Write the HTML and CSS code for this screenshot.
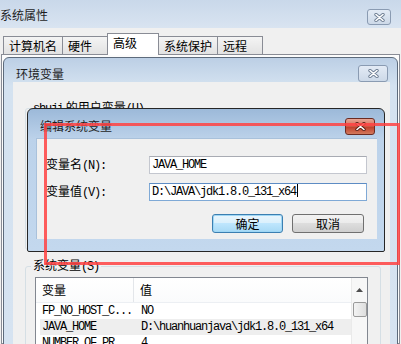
FILE: index.html
```html
<!DOCTYPE html>
<html lang="zh">
<head>
    <meta charset="UTF-8">
    <title>编辑系统变量</title>
    <link rel="stylesheet" href="styles.css">
</head>
<body>
    <div class="screen">
        <div class="sys">
            <div class="sys-title">
                <span class="title">系统属性</span>
                <span class="close close-sys">
                    <svg width="11" height="9" viewBox="0 0 11 9"><path d="M2 1.5 L9 7.5 M9 1.5 L2 7.5" stroke="#6f7f94" stroke-width="3.4" stroke-linecap="round"/><path d="M2 1.5 L9 7.5 M9 1.5 L2 7.5" stroke="#fff" stroke-width="1.6" stroke-linecap="round"/></svg>
                </span>
            </div>
            <div class="sys-body">
                <div class="tabs">
                    <span class="tab">计算机名</span>
                    <span class="tab">硬件</span>
                    <span class="tab active">高级</span>
                    <span class="tab">系统保护</span>
                    <span class="tab">远程</span>
                </div>
                <div class="tab-panel"></div>
            </div>
        </div>

        <div class="win env">
            <div class="titlebar">
                <span class="title">环境变量</span>
                <span class="close">
                    <svg width="11" height="9" viewBox="0 0 11 9"><path d="M2 1.5 L9 7.5 M9 1.5 L2 7.5" stroke="#6f7f94" stroke-width="3.4" stroke-linecap="round"/><path d="M2 1.5 L9 7.5 M9 1.5 L2 7.5" stroke="#fff" stroke-width="1.6" stroke-linecap="round"/></svg>
                </span>
            </div>
            <div class="client env-client">
                <fieldset class="group user-group">
                    <legend><span class="mono">shuji</span> 的用户变量<span class="mono">(U)</span></legend>
                </fieldset>
                <fieldset class="group">
                    <legend>系统变量<span class="mono">(S)</span></legend>
                    <div class="listview">
                        <div class="lv-main">
                            <div class="lv-head">
                                <span class="lv-col1">变量</span>
                                <span class="lv-col2">值</span>
                            </div>
                            <div class="lv-row mono">
                                <span class="lv-col1">FP_NO_HOST_C...</span>
                                <span>NO</span>
                            </div>
                            <div class="lv-row mono selected">
                                <span class="lv-col1">JAVA_HOME</span>
                                <span>D:\huanhuanjava\jdk1.8.0_131_x64</span>
                            </div>
                            <div class="lv-row mono">
                                <span class="lv-col1">NUMBER_OF_PR...</span>
                                <span>4</span>
                            </div>
                        </div>
                        <div class="scrollbar">
                            <span class="sb-up">
                                <svg width="7" height="4" viewBox="0 0 7 4"><path d="M0 4 L3.5 0 L7 4 Z" fill="#4d4d4d"/></svg>
                            </span>
                            <span class="sb-thumb"></span>
                        </div>
                    </div>
                </fieldset>
            </div>
        </div>

        <div class="win edit">
            <div class="titlebar">
                <span class="title">编辑系统变量</span>
                <span class="close close-red">
                    <svg width="11" height="9" viewBox="0 0 11 9"><path d="M2 1.5 L9 7.5 M9 1.5 L2 7.5" stroke="#5a1d14" stroke-width="3.4" stroke-linecap="round"/><path d="M2 1.5 L9 7.5 M9 1.5 L2 7.5" stroke="#fff" stroke-width="1.6" stroke-linecap="round"/></svg>
                </span>
            </div>
            <div class="client edit-client">
                <div class="field-grid">
                    <span class="label">变量名<span class="mono">(N):</span></span>
                    <div class="textbox mono">JAVA_HOME</div>
                    <span class="label">变量值<span class="mono">(V):</span></span>
                    <div class="textbox focused mono">D:\JAVA\jdk1.8.0_131_x64<span class="caret"></span></div>
                </div>
                <div class="buttons">
                    <span class="button default">确定</span>
                    <span class="button">取消</span>
                </div>
            </div>
        </div>

        <div class="annot"></div>
    </div>
</body>
</html>
```

FILE: styles.css
```css
* {
    box-sizing: border-box;
}

body {
    margin: 0;
    background: #f0f0f0;
    font-family: "Noto Sans CJK SC", sans-serif;
    font-size: 12px;
    color: #000;
}

.screen {
    position: relative;
    width: 401px;
    height: 344px;
    overflow: hidden;
}

.mono {
    font-family: "Liberation Mono", monospace;
    font-size: 12px;
    letter-spacing: -1.2px;
}

.title {
    line-height: 16px;
    color: #1e1e1e;
}

/* 系统属性 */
.sys {
    display: flex;
    flex-direction: column;
    height: 344px;
}

.sys-title {
    height: 28px;
    display: flex;
    justify-content: space-between;
    align-items: flex-start;
    padding: 7px 10px 0 0;
    background: linear-gradient(#c9d8ea, #d9e4f1);
}

.sys-body {
    flex: 1;
    display: flex;
    flex-direction: column;
    padding-top: 5px;
}

.tabs {
    display: flex;
    align-items: flex-end;
    height: 22px;
    padding-left: 3px;
    position: relative;
    z-index: 1;
}

.tab {
    min-width: 46px;
    height: 18px;
    margin: 0 -1px 1px 0;
    padding: 1px 5px 0;
    line-height: 16px;
    border: 1px solid #898c95;
    border-bottom: none;
    background: linear-gradient(#f4f4f4, #e2e2e2);
}

.tab.active {
    height: 22px;
    min-width: 52px;
    margin: 0 -1px 0 0;
    background: #fff;
    position: relative;
    z-index: 2;
}

.tab-panel {
    flex: 1;
    margin: -1px 1px 0 1px;
    border: 1px solid #898c95;
    background: #fcfcfc;
}

/* windows */
.win {
    position: absolute;
    display: flex;
    flex-direction: column;
}

.titlebar {
    display: flex;
    justify-content: space-between;
    align-items: flex-start;
}

.close {
    display: flex;
    align-items: center;
    justify-content: center;
    width: 30px;
    height: 17px;
    border: 1px solid #8a9bb2;
    border-radius: 3px;
    background: linear-gradient(#e3ebf5, #cdd9e8);
}

.close-sys {
    width: 24px;
    height: 16px;
    margin-top: 2px;
}

.close-red {
    border-color: #6b2b22;
    background: linear-gradient(#e8a594, #d0705c 45%, #c1402b 55%, #d27a5e);
}

.client {
    flex: 1;
    background: #f0f0f0;
}

.env {
    left: 3px;
    top: 57px;
    width: 395px;
    height: 300px;
    border: 1px solid #5d6b7c;
    border-radius: 6px 6px 0 0;
    background: linear-gradient(#bccfe5, #d4e2f0 28px, #d6e3f1);
}

.env .titlebar {
    height: 27px;
    padding: 8px 9px 0 12px;
}

.env .close {
    margin-top: -1px;
}

.env-client {
    margin: 0 7px 0 9px;
    padding: 18px 0 0 12px;
}

.group {
    width: 356px;
    margin: 0;
    padding: 3px 0 0 9px;
    min-width: 0;
    border: 1px solid #d5dfe5;
    border-radius: 3px;
}

.group legend {
    padding: 0 2px;
    margin-left: -4px;
    line-height: 14px;
}

.user-group {
    height: 150px;
    margin-bottom: 8px;
}

.listview {
    display: flex;
    width: 333px;
    height: 90px;
    border: 1px solid #828790;
    background: #fff;
}

.lv-main {
    flex: 1;
}

.lv-head {
    display: flex;
    height: 25px;
    line-height: 24px;
    padding-left: 6px;
    border-bottom: 1px solid #eceff3;
    background: linear-gradient(#fff, #fafbfc);
}

.lv-head .lv-col1 {
    width: 92px;
    border-right: 1px solid #e3e6ea;
}

.lv-head .lv-col2 {
    padding-left: 6px;
}

.lv-row {
    display: flex;
    height: 16px;
    line-height: 17px;
    margin-left: 4px;
    padding-left: 2px;
}

.lv-row .lv-col1 {
    width: 99px;
}

.lv-row.selected {
    background: #eeeeee;
}

.scrollbar {
    width: 16px;
    display: flex;
    flex-direction: column;
    align-items: center;
    border-left: 1px solid #eaeaea;
    background: #f7f7f7;
}

.sb-up {
    height: 24px;
    display: flex;
    align-items: center;
    justify-content: center;
}

.sb-thumb {
    width: 14px;
    height: 15px;
    border: 1px solid #9a9a9a;
    border-radius: 2px;
    background: linear-gradient(90deg, #f3f3f3, #dedede);
}

/* 编辑系统变量 */
.edit {
    left: 27px;
    top: 108px;
    width: 358px;
    height: 144px;
    border: 1px solid #262626;
    border-radius: 6px 6px 2px 2px;
    background: linear-gradient(#9cb9d9, #bcd2ea 30px, #c3d8ee);
}

.edit .titlebar {
    height: 29px;
    padding: 9px 9px 0 12px;
}

.edit-client {
    margin: 0 7px 12px 8px;
    padding: 18px 10px 0 10px;
    border: 1px solid #a9c1db;
    border-width: 1px 0 0 1px;
}

.field-grid {
    display: grid;
    grid-template-columns: 103px 218px;
    grid-auto-rows: 18px;
    row-gap: 9px;
    align-items: center;
    margin-left: -1px;
    margin-top: -1px;
}

.label {
    line-height: 14px;
}

.textbox {
    height: 18px;
    line-height: 16px;
    padding-left: 2px;
    border: 1px solid #c4c7cf;
    border-top-color: #a8abb3;
    background: #fff;
}

.textbox.focused {
    border-color: #7fa9d6;
    border-top-color: #5d8cc4;
}

.caret {
    display: inline-block;
    width: 1px;
    height: 13px;
    margin-left: 1px;
    vertical-align: -2px;
    background: #000;
}

.buttons {
    display: flex;
    justify-content: flex-end;
    gap: 9px;
    margin-top: 13px;
    padding-right: 3px;
}

.button {
    width: 72px;
    height: 19px;
    line-height: 17px;
    text-align: center;
    border: 1px solid #707070;
    border-radius: 3px;
    background: linear-gradient(#f2f2f2, #ebebeb 50%, #dddddd 50%, #cfcfcf);
}

.button.default {
    width: 71px;
    border-color: #3c7fb1;
    box-shadow: inset 0 0 0 1px #9fd7f5;
    background: linear-gradient(#eaf6fd, #d9f0fc 50%, #bee6fd 50%, #a7d9f5);
}

/* 标注框 */
.annot {
    position: absolute;
    left: 44px;
    top: 123px;
    width: 356px;
    height: 142px;
    border: 3px solid rgba(255, 66, 66, 0.85);
}
```
